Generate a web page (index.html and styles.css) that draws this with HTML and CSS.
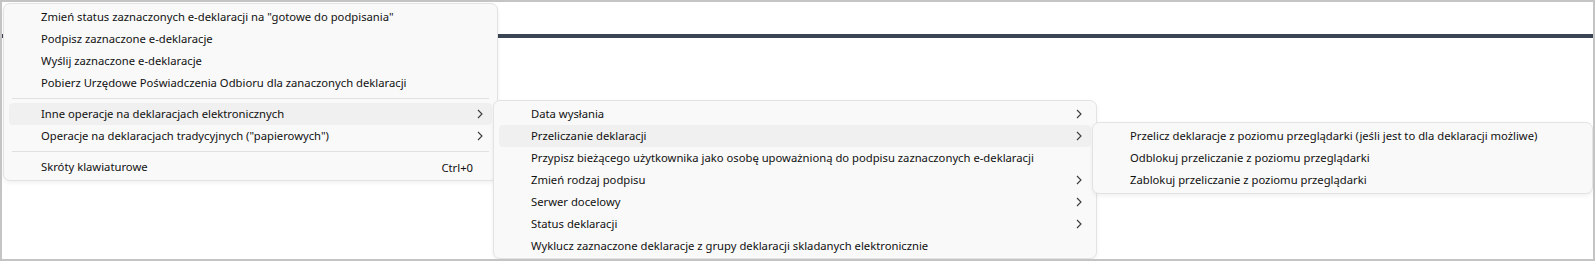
FILE: index.html
```html
<!DOCTYPE html>
<html lang="pl">
<head>
<meta charset="utf-8">
<title>Menu</title>
<link rel="stylesheet" href="styles.css">
</head>
<body>
<div class="frame">
  <div class="bar"></div>

  <div class="menu menu-main">
    <div class="item"><span class="label">Zmień status zaznaczonych e-deklaracji na "gotowe do podpisania"</span></div>
    <div class="item"><span class="label">Podpisz zaznaczone e-deklaracje</span></div>
    <div class="item"><span class="label">Wyślij zaznaczone e-deklaracje</span></div>
    <div class="item"><span class="label">Pobierz Urzędowe Poświadczenia Odbioru dla zanaczonych deklaracji</span></div>
    <div class="sep"></div>
    <div class="item active"><span class="label">Inne operacje na deklaracjach elektronicznych</span><svg class="chev" viewBox="0 0 6 10" width="6" height="10"><path d="M1 1L5 5L1 9"/></svg></div>
    <div class="item"><span class="label">Operacje na deklaracjach tradycyjnych ("papierowych")</span><svg class="chev" viewBox="0 0 6 10" width="6" height="10"><path d="M1 1L5 5L1 9"/></svg></div>
    <div class="sep"></div>
    <div class="item"><span class="label">Skróty klawiaturowe</span><span class="shortcut">Ctrl+0</span></div>
  </div>

  <div class="menu menu-sub1">
    <div class="item"><span class="label">Data wysłania</span><svg class="chev" viewBox="0 0 6 10" width="6" height="10"><path d="M1 1L5 5L1 9"/></svg></div>
    <div class="item active"><span class="label">Przeliczanie deklaracji</span><svg class="chev" viewBox="0 0 6 10" width="6" height="10"><path d="M1 1L5 5L1 9"/></svg></div>
    <div class="item"><span class="label">Przypisz bieżącego użytkownika jako osobę upoważnioną do podpisu zaznaczonych e-deklaracji</span></div>
    <div class="item"><span class="label">Zmień rodzaj podpisu</span><svg class="chev" viewBox="0 0 6 10" width="6" height="10"><path d="M1 1L5 5L1 9"/></svg></div>
    <div class="item"><span class="label">Serwer docelowy</span><svg class="chev" viewBox="0 0 6 10" width="6" height="10"><path d="M1 1L5 5L1 9"/></svg></div>
    <div class="item"><span class="label">Status deklaracji</span><svg class="chev" viewBox="0 0 6 10" width="6" height="10"><path d="M1 1L5 5L1 9"/></svg></div>
    <div class="item"><span class="label">Wyklucz zaznaczone deklaracje z grupy deklaracji skladanych elektronicznie</span></div>
  </div>

  <div class="menu menu-sub2">
    <div class="item"><span class="label">Przelicz deklaracje z poziomu przeglądarki (jeśli jest to dla deklaracji możliwe)</span></div>
    <div class="item"><span class="label">Odblokuj przeliczanie z poziomu przeglądarki</span></div>
    <div class="item"><span class="label">Zablokuj przeliczanie z poziomu przeglądarki</span></div>
  </div>
</div>
</body>
</html>
```
FILE: styles.css
```css
html, body {
  margin: 0;
  padding: 0;
  background: #ffffff;
}

body {
  width: 1595px;
  height: 261px;
  overflow: hidden;
  font-family: "Noto Sans", "Open Sans", "DejaVu Sans", sans-serif;
  font-size: 11.25px;
  color: #111111;
}

.frame {
  position: relative;
  box-sizing: border-box;
  width: 1595px;
  height: 261px;
  border: 2px solid #c4c4c4;
  background: #ffffff;
  overflow: hidden;
}

.bar {
  margin-top: 32px;
  height: 4px;
  background: #3a4452;
}

.menu {
  position: absolute;
  box-sizing: border-box;
  background: #f9f9f9;
  border: 1px solid #e3e3e3;
  border-radius: 7px;
  padding: 2px 5px;
  box-shadow: 0 2px 4px rgba(0, 0, 0, 0.06);
}

.menu-main {
  left: 1px;
  top: 1px;
  width: 495px;
}

.menu-sub1 {
  left: 491px;
  top: 98px;
  width: 604px;
  padding-bottom: 1px;
}

.menu-sub2 {
  left: 1090px;
  top: 120px;
  width: 501px;
}

.item {
  display: flex;
  align-items: center;
  height: 22px;
  padding: 0 9px 0 32px;
  border-radius: 4px;
  white-space: nowrap;
}

.item.active {
  background: #f0f0f0;
}

.label {
  flex: 1;
  line-height: 22px;
}

.shortcut {
  margin-right: 10px;
}

.chev {
  display: block;
  fill: none;
  stroke: #3a3a3a;
  stroke-width: 1.1;
}

.sep {
  height: 1px;
  margin: 4px 3px 4px 3px;
  background: #e0e0e0;
}
```
